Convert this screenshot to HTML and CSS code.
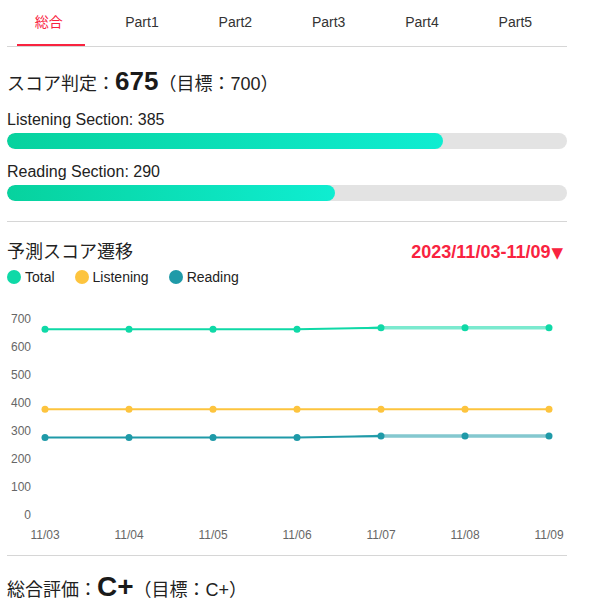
FILE: index.html
```html
<!DOCTYPE html>
<html lang="ja">
<head>
<meta charset="utf-8">
<title>スコア</title>
<link rel="stylesheet" href="styles.css">
</head>
<body>
<div class="page">
  <nav class="tabs">
    <ul class="tab-list">
      <li class="tab is-active">総合</li>
      <li class="tab">Part1</li>
      <li class="tab">Part2</li>
      <li class="tab">Part3</li>
      <li class="tab">Part4</li>
      <li class="tab">Part5</li>
    </ul>
  </nav>

  <section class="summary">
    <div class="score-line">
      <span class="score-label">スコア判定：</span><span class="score-big">675</span><span class="score-target">（目標：700）</span>
    </div>

    <div class="section-score">
      <div class="section-label">Listening Section: 385</div>
      <div class="bar"><div class="bar-fill" style="width: 77.8%"></div></div>
    </div>
    <div class="section-score">
      <div class="section-label">Reading Section: 290</div>
      <div class="bar"><div class="bar-fill" style="width: 58.6%"></div></div>
    </div>
  </section>

  <section class="trend">
    <div class="trend-head">
      <h2 class="trend-title">予測スコア遷移</h2>
      <div class="trend-range">2023/11/03-11/09<span class="caret">▼</span></div>
    </div>
    <ul class="legend">
      <li class="legend-item"><span class="dot dot-total"></span>Total</li>
      <li class="legend-item"><span class="dot dot-listening"></span>Listening</li>
      <li class="legend-item"><span class="dot dot-reading"></span>Reading</li>
    </ul>

    <svg class="chart" width="560" height="250" viewBox="0 0 560 250">
      <!-- y axis labels -->
      <g class="axis-y">
        <text x="24" y="27">700</text>
        <text x="24" y="55">600</text>
        <text x="24" y="83">500</text>
        <text x="24" y="111">400</text>
        <text x="24" y="139">300</text>
        <text x="24" y="167">200</text>
        <text x="24" y="195">100</text>
        <text x="24" y="223">0</text>
      </g>
      <!-- x axis labels -->
      <g class="axis-x">
        <text x="38" y="243">11/03</text>
        <text x="122" y="243">11/04</text>
        <text x="206" y="243">11/05</text>
        <text x="290" y="243">11/06</text>
        <text x="374" y="243">11/07</text>
        <text x="458" y="243">11/08</text>
        <text x="542" y="243">11/09</text>
      </g>

      <!-- Total -->
      <g class="series series-total">
        <polyline class="line" points="38,36.2 122,36.2 206,36.2 290,36.2 374,34.8"/>
        <polyline class="line-hi" points="374,34.8 458,34.8 542,34.8"/>
        <polygon class="wedge" points="330,35.7 374,33.3 374,36.3"/>
        <circle cx="38" cy="36.2" r="3.5"/>
        <circle cx="122" cy="36.2" r="3.5"/>
        <circle cx="206" cy="36.2" r="3.5"/>
        <circle cx="290" cy="36.2" r="3.5"/>
        <circle cx="374" cy="34.8" r="3.5"/>
        <circle cx="458" cy="34.8" r="3.5"/>
        <circle cx="542" cy="34.8" r="3.5"/>
      </g>

      <!-- Listening -->
      <g class="series series-listening">
        <polyline class="line" points="38,116.3 122,116.3 206,116.3 290,116.3 374,116.3 458,116.3 542,116.3"/>
        <circle cx="38" cy="116.3" r="3.5"/>
        <circle cx="122" cy="116.3" r="3.5"/>
        <circle cx="206" cy="116.3" r="3.5"/>
        <circle cx="290" cy="116.3" r="3.5"/>
        <circle cx="374" cy="116.3" r="3.5"/>
        <circle cx="458" cy="116.3" r="3.5"/>
        <circle cx="542" cy="116.3" r="3.5"/>
      </g>

      <!-- Reading -->
      <g class="series series-reading">
        <polyline class="line" points="38,144.4 122,144.4 206,144.4 290,144.4 374,143"/>
        <polyline class="line-hi" points="374,143 458,143 542,143"/>
        <polygon class="wedge" points="330,143.9 374,141.5 374,144.5"/>
        <circle cx="38" cy="144.4" r="3.5"/>
        <circle cx="122" cy="144.4" r="3.5"/>
        <circle cx="206" cy="144.4" r="3.5"/>
        <circle cx="290" cy="144.4" r="3.5"/>
        <circle cx="374" cy="143" r="3.5"/>
        <circle cx="458" cy="143" r="3.5"/>
        <circle cx="542" cy="143" r="3.5"/>
      </g>
    </svg>
  </section>

  <section class="grade">
    <span class="score-label">総合評価：</span><span class="grade-big">C+</span><span class="score-target">（目標：C+）</span>
  </section>
</div>
</body>
</html>
```

FILE: styles.css
```css
* {
  box-sizing: border-box;
}

html, body {
  margin: 0;
  padding: 0;
  background: #ffffff;
}

body {
  font-family: "Liberation Sans", Arial, "Noto Sans CJK JP", sans-serif;
  color: #222222;
}

.page {
  width: 560px;
  margin-left: 7px;
}

/* ---- tabs ---- */
.tabs {
  border-bottom: 1px solid #d6d6d6;
}

.tab-list {
  list-style: none;
  margin: 0 5px 0 -5px;
  padding: 0;
  display: grid;
  grid-template-columns: repeat(6, 1fr);
}

.tab {
  position: relative;
  height: 46px;
  line-height: 44px;
  text-align: center;
  font-size: 14px;
  color: #333333;
}

.tab.is-active {
  color: #f9233f;
}

.tab.is-active::after {
  content: "";
  position: absolute;
  left: calc(50% - 32px);
  bottom: 0;
  width: 68px;
  height: 2px;
  background: #f9233f;
}

/* ---- score summary ---- */
.score-line {
  margin-top: 18px;
  height: 32px;
  display: flex;
  align-items: baseline;
  font-size: 18px;
  line-height: 32px;
}

.score-big,
.grade-big {
  font-size: 26px;
  font-weight: bold;
  color: #1a1a1a;
}

.section-score {
  margin-top: 14px;
}

.summary .section-score:first-of-type {
  margin-top: 15px;
}

.section-label {
  font-size: 16px;
  line-height: 18px;
  margin-bottom: 4px;
}

.bar {
  height: 16px;
  border-radius: 8px;
  background: #e3e3e3;
  overflow: hidden;
}

.bar-fill {
  height: 100%;
  border-radius: 8px;
  background: linear-gradient(90deg, #07d29e 0%, #0fedd1 100%);
}

/* ---- trend ---- */
.trend {
  margin-top: 20px;
  border-top: 1px solid #d6d6d6;
}

.trend-head {
  margin-top: 18px;
  display: flex;
  justify-content: space-between;
  align-items: baseline;
  height: 24px;
  line-height: 24px;
}

.trend-title {
  margin: 0;
  font-size: 18px;
  font-weight: normal;
}

.trend-range {
  font-size: 18px;
  font-weight: bold;
  color: #f9233f;
  padding-right: 4px;
}

.caret {
  font-family: "DejaVu Sans", sans-serif;
  font-size: 15px;
  margin-left: 1px;
}

.legend {
  list-style: none;
  margin: 5px 0 0;
  padding: 0;
  display: flex;
  gap: 20px;
  height: 16px;
}

.legend-item {
  display: flex;
  align-items: center;
  gap: 4px;
  font-size: 14px;
  line-height: 16px;
}

.dot {
  width: 14px;
  height: 14px;
  border-radius: 50%;
}

.dot-total { background: #0fd9a7; }
.dot-listening { background: #fdc43e; }
.dot-reading { background: #1f9aa8; }

.chart {
  display: block;
  margin-top: 8px;
}

.axis-y text {
  font-size: 12px;
  fill: #666666;
  text-anchor: end;
  dominant-baseline: middle;
}

.axis-x text {
  font-size: 12px;
  fill: #666666;
  text-anchor: middle;
  dominant-baseline: middle;
}

.series .line {
  fill: none;
  stroke-width: 2;
}

.series .line-hi {
  fill: none;
  stroke-width: 3.5;
  stroke-opacity: 0.55;
}

.series .wedge {
  fill-opacity: 0.55;
}

.series-total .line,
.series-total .line-hi { stroke: #0fd9a7; }
.series-total circle,
.series-total .wedge { fill: #0fd9a7; }

.series-listening .line { stroke: #fdc43e; }
.series-listening circle { fill: #fdc43e; }

.series-reading .line,
.series-reading .line-hi { stroke: #1f9aa8; }
.series-reading circle,
.series-reading .wedge { fill: #1f9aa8; }

/* ---- overall grade ---- */
.grade {
  margin-top: 12px;
  border-top: 1px solid #d6d6d6;
  padding-top: 15px;
  display: flex;
  align-items: baseline;
  font-size: 18px;
  line-height: 32px;
}

.grade-big {
  font-size: 28px;
}
```
